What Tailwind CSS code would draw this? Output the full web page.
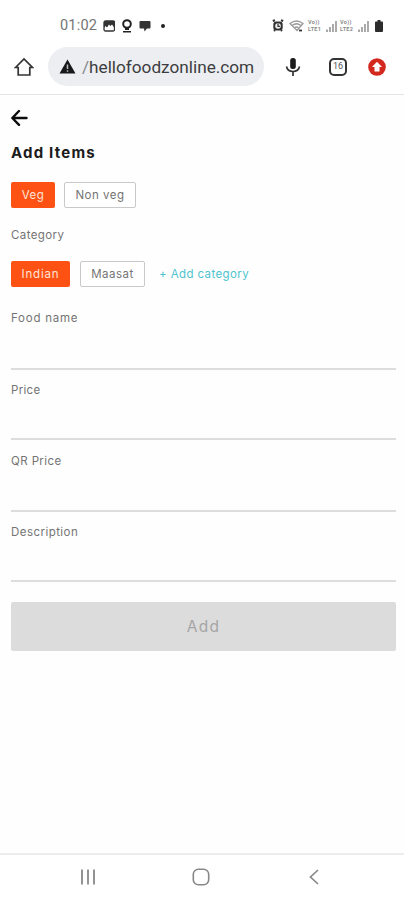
<!DOCTYPE html>
<html lang="en">
<head>
<meta charset="utf-8">
<meta name="viewport" content="width=device-width, initial-scale=1">
<title>Add Items</title>
<script src="https://cdn.jsdelivr.net/npm/@tailwindcss/browser@4"></script>
</head>
<body class="bg-[#fefefe] font-['Inter',sans-serif]">
<div class="flex h-[900px] w-[404px] flex-col overflow-hidden">
  <header class="flex h-[95px] flex-col border-b border-[#e2e4e6] bg-white">
    <div class="flex h-[39px] items-center pt-[12px] pl-[60px] pr-[21px] text-[#757575]">
      <span class="w-[43px] whitespace-nowrap pt-[2px] font-['Roboto',sans-serif] text-[14.5px] leading-none tracking-[0.2px]">01:02</span>
      <svg class="h-3 w-3" viewBox="0 0 12 12"><rect x="1" y="1" width="10.5" height="10" rx="1.5" fill="#fff" stroke="#333" stroke-width="1.3"/><path d="M1 1h10.500v7L9 4.500 7.500 6 6 4.500 4 7.500 2.500 6 1 8Z" fill="#333"/></svg>
      <svg class="ml-[6px] h-[14px] w-3" viewBox="0 0 12 14"><circle cx="6" cy="5" r="3.800" fill="#fff" stroke="#222" stroke-width="2"/><path d="M4 8h4v3H4zM2 12h8v1.500H2z" fill="#222"/></svg>
      <svg class="ml-[6px] h-3 w-3" viewBox="0 0 12 12"><path d="M1.500 1h9q1 0 1 1v5.500q0 1-1 1H8L5.500 11.500 5 8.500H1.500q-1 0-1-1V2q0-1 1-1Z" fill="#333"/></svg>
      <span class="ml-[10px] h-1 w-1 rounded-full bg-[#222]"></span>
      <svg class="ml-auto h-[14px] w-3" viewBox="0 0 12 14"><path d="M.8 2 3 1.200M11.200 2 9 1.200M2 12l1-1M10 12l-1-1" stroke="#333" stroke-width="2"/><rect x="1.300" y="2.500" width="9.400" height="9" rx="3" fill="#333"/><circle cx="6" cy="7" r="2.800" fill="#eee"/><path d="M6 4.500V7.300h2" fill="none" stroke="#333" stroke-width="1.200"/></svg>
      <svg class="ml-[5px] h-[14px] w-4" viewBox="0 0 16 14" fill="none" stroke="#9a9a9a" stroke-width="1.300"><path d="M1 4.500Q7.500-.5 14 4.500L8 11.500ZM3.200 6.500Q7.500 3 11.800 6.500M5.500 9Q7.500 7 9.500 9"/><path d="M10 11.500h3" stroke="#333" stroke-width="1.800"/></svg>
      <div class="ml-[3px] flex w-[15px] flex-col gap-[1px] font-['Roboto',sans-serif] text-[5.500px] font-bold leading-[6.500px] tracking-[0.3px] text-[#8c8c8c]"><span>Vo))</span><span>LTE1</span></div>
      <svg class="ml-[2px] h-3 w-[13px]" viewBox="0 0 13 12" stroke="#969696" stroke-width="1.600"><path d="M2 9.500V12M5 7V12M8 4V12M11 1V12"/></svg>
      <div class="ml-[2px] flex w-[15px] flex-col gap-[1px] font-['Roboto',sans-serif] text-[5.500px] font-bold leading-[6.500px] tracking-[0.3px] text-[#8c8c8c]"><span>Vo))</span><span>LTE2</span></div>
      <svg class="ml-[2px] h-3 w-[13px]" viewBox="0 0 13 12" stroke="#969696" stroke-width="1.600"><path d="M2 9.500V12M5 7V12M8 4V12M11 1V12"/></svg>
      <svg class="ml-[5px] h-3 w-2" viewBox="0 0 8 12"><path d="M2.500 0h3v1.500H7q1 0 1 1V11q0 1-1 1H1q-1 0-1-1V2.500q0-1 1-1h1.500Z" fill="#2c2c2c"/></svg>
    </div>
    <div class="flex h-[55px] items-center pl-[14px]">
      <svg class="h-5 w-5" viewBox="0 0 20 20" fill="none" stroke="#333" stroke-width="1.700"><path d="M1.500 10.500 10 2l8.500 8.500H15.800V18H4.200V10.500Z"/></svg>
      <div class="ml-[14px] flex h-[39px] w-[216px] items-center rounded-full bg-[#eceef1] pl-[11px]">
        <svg class="h-[15px] w-[17px]" viewBox="0 0 17 15"><path d="M8.500.5 16.500 14.500H.5Z" fill="#17181a"/><path d="M8.500 5.500v4.500M8.500 11.200v1.600" stroke="#bbb" stroke-width="1.500"/></svg>
        <span class="ml-[6px] whitespace-nowrap pt-[2px] font-['Roboto',sans-serif] text-[17.200px] leading-none text-[#3c3d40]"><span class="text-[#85878a]">/</span>hellofoodzonline.com</span>
      </div>
      <svg class="ml-[21px] h-5 w-4" viewBox="0 0 16 20"><rect x="5.200" y="1" width="5.600" height="11" rx="2.500" fill="#1c1c1c"/><path d="M1.500 9.500Q2.500 14.500 8 14.500T14.500 9.500M8 14.500V19" fill="none" stroke="#333" stroke-width="1.700"/></svg>
      <div class="ml-[28px] flex h-[18px] w-[18px] items-center justify-center rounded-[5px] border-2 border-[#333] bg-white font-['Roboto',sans-serif] text-[9px] leading-none text-[#555]">16</div>
      <svg class="ml-[21px] h-[18px] w-[18px]" viewBox="0 0 18 18"><circle cx="9" cy="9" r="8.800" fill="#d3281e"/><path d="M9 3.800 14 9h-2.500v4.500h-5V9H4Z" fill="#fff"/></svg>
    </div>
  </header>

  <main class="flex flex-1 flex-col pr-[8px] pl-[11px] text-[#747474]">
    <svg class="mt-[14px] h-[18px] w-[17px]" viewBox="0 0 17 18" fill="none" stroke="#0c0c0c" stroke-width="2.400" stroke-linecap="round" stroke-linejoin="round"><path d="M15.500 9H1.500M8 2 1.300 9 8 15.800"/></svg>
    <h1 class="mt-[16px] h-5 whitespace-nowrap text-[15px] font-bold leading-5 tracking-[1.200px] text-[#1c1c1c]">Add Items</h1>
    <div class="mt-[19px] flex h-[26px] text-[11.500px]">
      <button class="w-[44px] rounded-[2px] bg-[#fe5215] pt-[1px] tracking-[0.500px] text-[#ffe4d8]">Veg</button>
      <button class="ml-[9px] w-[72px] rounded-[2px] border border-[#c9c9c9] bg-white pt-[1px] tracking-[0.500px]">Non veg</button>
    </div>
    <div class="mt-[19px] h-4 text-[11.500px] leading-4 tracking-[0.400px]">Category</div>
    <div class="mt-[18px] flex h-[26px] items-center text-[11.500px]">
      <button class="h-full w-[59px] rounded-[2px] bg-[#fe5215] pt-[1px] tracking-[0.800px] text-[#ffe4d8]">Indian</button>
      <button class="ml-[10px] h-full w-[65px] rounded-[2px] border border-[#c9c9c9] bg-white pt-[1px] tracking-[0.500px]">Maasat</button>
      <button class="ml-[14px] whitespace-nowrap pt-[1px] tracking-[0.400px] text-[#4fc4cf]">+ Add category</button>
    </div>
    <label class="mt-[23px] block h-[60px] border-b-2 border-[#dddddd] text-[11.500px] leading-4 tracking-[0.750px]">Food name</label>
    <label class="mt-[12px] block h-[58px] border-b-2 border-[#dddddd] text-[11.500px] leading-4 tracking-[0.300px]">Price</label>
    <label class="mt-[13px] block h-[59px] border-b-2 border-[#dddddd] text-[11.500px] leading-4 tracking-[0.400px]">QR Price</label>
    <label class="mt-[12px] block h-[58px] border-b-2 border-[#dddddd] text-[11.500px] leading-4 tracking-[0.450px]">Description</label>
    <button class="mt-[20px] h-[49px] rounded-[2px] bg-[#dcdcdc] text-[15.500px] tracking-[1.200px] text-[#a5a5a5]">Add</button>
  </main>

  <nav class="flex h-[47px] items-center border-t-2 border-[#ececec] bg-white pb-[1px] pl-[80px]">
    <svg class="h-4 w-4" viewBox="0 0 16 16" stroke="#888" stroke-width="1.800"><path d="M2 .5v15M8 .5v15M14 .5v15"/></svg>
    <svg class="ml-[96px] h-[18px] w-[18px]" viewBox="0 0 18 18"><rect x="1.300" y="1.300" width="15.400" height="15.400" rx="5" fill="none" stroke="#888" stroke-width="1.600"/></svg>
    <svg class="ml-[99px] h-4 w-[10px]" viewBox="0 0 10 16"><path d="M9 1 1.500 8 9 15" fill="none" stroke="#888" stroke-width="1.700"/></svg>
  </nav>
</div>
</body>
</html>
